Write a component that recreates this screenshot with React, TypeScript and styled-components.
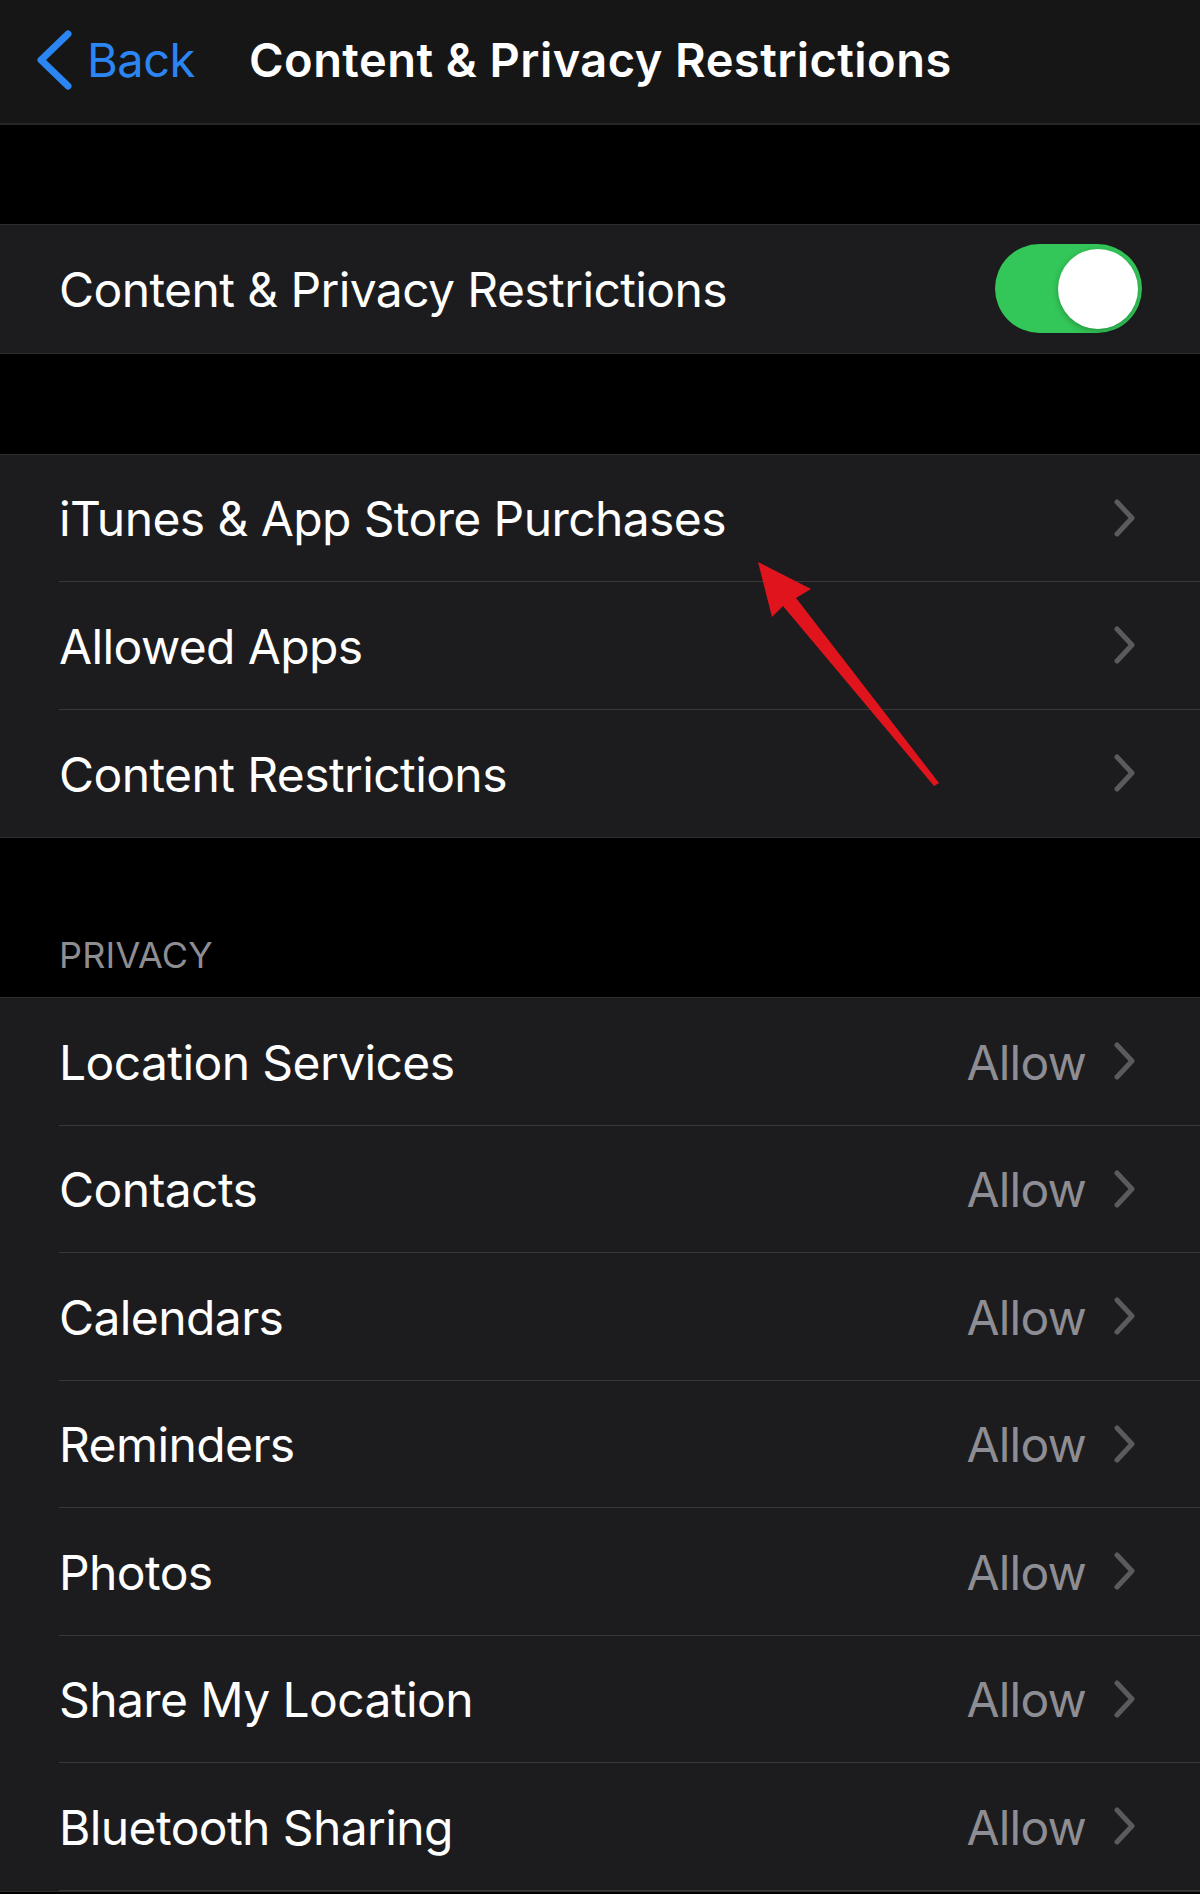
import React from "react";
import styled, { createGlobalStyle } from "styled-components";

const Global = createGlobalStyle`
  html, body { margin: 0; padding: 0; background: #000; }
  body { font-family: Inter, "Noto Sans", "Liberation Sans", sans-serif; -webkit-font-smoothing: antialiased; }
  * { box-sizing: border-box; }
`;

const Page = styled.div`
  position: relative;
  width: 1200px;
  height: 1894px;
  overflow: hidden;
  background: #000;
  color: #fff;
`;

const NavBar = styled.header`
  height: 125px;
  background: #161616;
  border-bottom: 2px solid #262626;
  display: flex;
  align-items: center;
  padding: 0 0 4px 36px;
`;

const BackButton = styled.div`
  display: flex;
  align-items: center;
  color: #2b86f4;
  font-size: 47px;
  letter-spacing: -0.5px;
  width: 213px;
  gap: 13px;
`;

const Title = styled.h1`
  margin: 0;
  font-size: 47px;
  font-weight: 600;
  letter-spacing: 0.45px;
  color: #fff;
`;

const Spacer = styled.div<{ h: number }>`
  height: ${(p) => p.h}px;
`;

const SectionHeader = styled.div`
  height: 159px;
  display: flex;
  align-items: flex-end;
  padding: 0 0 20px 59px;
  font-size: 36px;
  color: #8d8d92;
  letter-spacing: 0.2px;
`;

const Group = styled.section`
  background: #1c1c1e;
  border-top: 1.5px solid #2e2e30;
  border-bottom: 1.5px solid #2e2e30;
`;

const Row = styled.div<{ last?: boolean }>`
  height: 127.5px;
  margin-left: 59px;
  padding-right: 64px;
  display: flex;
  align-items: center;
  border-bottom: ${(p) => (p.last ? "none" : "1.5px solid #38383a")};
`;

const Label = styled.span`
  flex: 1;
  font-size: 48px;
  letter-spacing: -0.6px;
  color: #fff;
  padding-top: 2px;
`;

const Value = styled.span`
  font-size: 48px;
  letter-spacing: -0.8px;
  color: #8d8d93;
  margin-right: 28px;
  padding-top: 2px;
`;

const ToggleRow = styled(Row)`
  padding-right: 58px;
`;

const Toggle = styled.div<{ on: boolean }>`
  width: 147px;
  height: 89px;
  border-radius: 45px;
  background: ${(p) => (p.on ? "#33c658" : "#39393d")};
  display: flex;
  align-items: center;
  justify-content: ${(p) => (p.on ? "flex-end" : "flex-start")};
  padding: 0 4px;
`;

const Knob = styled.div`
  width: 80px;
  height: 80px;
  border-radius: 50%;
  background: #fff;
  box-shadow: 0 2px 6px rgba(0, 0, 0, 0.25);
`;

const ArrowLayer = styled.svg`
  position: absolute;
  left: 0;
  top: 0;
  pointer-events: none;
`;

const Chevron = () => (
  <svg width="22" height="38" viewBox="0 0 22 38">
    <path d="M3 3 L18 19 L3 35" fill="none" stroke="#5b5b5f" strokeWidth="5" strokeLinecap="round" strokeLinejoin="round" />
  </svg>
);

const BackChevron = () => (
  <svg width="38" height="60" viewBox="0 0 38 60">
    <path d="M32 4 L5 30 L32 56" fill="none" stroke="#2b86f4" strokeWidth="7" strokeLinecap="round" strokeLinejoin="round" />
  </svg>
);

const privacy = [
  "Location Services",
  "Contacts",
  "Calendars",
  "Reminders",
  "Photos",
  "Share My Location",
  "Bluetooth Sharing",
];

export default function App() {
  return (
    <>
      <Global />
      <Page>
        <NavBar>
          <BackButton>
            <BackChevron />
            <span>Back</span>
          </BackButton>
          <Title>Content &amp; Privacy Restrictions</Title>
        </NavBar>
        <Spacer h={99} />
        <Group>
          <ToggleRow last>
            <Label>Content &amp; Privacy Restrictions</Label>
            <Toggle on>
              <Knob />
            </Toggle>
          </ToggleRow>
        </Group>
        <Spacer h={100} />
        <Group>
          <Row>
            <Label>iTunes &amp; App Store Purchases</Label>
            <Chevron />
          </Row>
          <Row>
            <Label>Allowed Apps</Label>
            <Chevron />
          </Row>
          <Row last>
            <Label>Content Restrictions</Label>
            <Chevron />
          </Row>
        </Group>
        <SectionHeader>PRIVACY</SectionHeader>
        <Group>
          {privacy.map((p) => (
            <Row key={p}>
              <Label>{p}</Label>
              <Value>Allow</Value>
              <Chevron />
            </Row>
          ))}
        </Group>
        <ArrowLayer width="1200" height="1894" viewBox="0 0 1200 1894">
          <polygon
            points="758,562 811,589 796,598 939,783 934,786 783,606 772,617"
            fill="#e0141c"
          />
        </ArrowLayer>
      </Page>
    </>
  );
}
